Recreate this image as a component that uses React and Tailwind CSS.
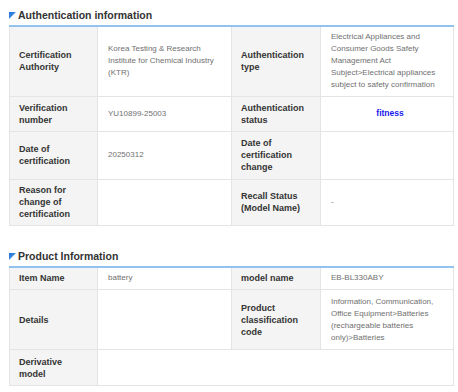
import React from 'react';

const Tri = () => (
  <svg width="7" height="7" viewBox="0 0 7 7" className="mr-[2px] shrink-0">
    <defs>
      <linearGradient id="tg" x1="0" y1="0" x2="1" y2="1">
        <stop offset="0" stopColor="#1f6fd6" />
        <stop offset="1" stopColor="#5aa6f0" />
      </linearGradient>
    </defs>
    <polygon points="0,0 7,0 0,7" fill="url(#tg)" />
  </svg>
);

const Title = ({ children, className = '' }) => (
  <div className={`flex items-center h-[19px] ${className}`}>
    <Tri />
    <span className="text-[10.5px] font-bold text-[#333] leading-none">{children}</span>
  </div>
);

const Label = ({ children }) => (
  <td className="bg-[#f4f4f4] border-r border-b border-[#e4e4e4] pl-[9px] pr-1 align-middle text-[9px] font-bold text-[#333] leading-[12px]">
    {children}
  </td>
);

const Value = ({ children, center = false, className = '' }) => (
  <td className={`border-r border-b border-[#e4e4e4] pl-[10px] pr-1 align-middle text-[8px] text-[#707070] leading-[12px] ${center ? 'text-center pl-0' : ''} ${className}`}>
    {children}
  </td>
);

const Cols = () => (
  <colgroup>
    <col style={{ width: 88 }} />
    <col style={{ width: 134 }} />
    <col style={{ width: 89 }} />
    <col style={{ width: 133 }} />
  </colgroup>
);

export default function App() {
  return (
    <div className="w-[458px] h-[392px] bg-white pl-[9px] pt-[6px]" style={{ fontFamily: '"Liberation Sans", Arial, sans-serif' }}>
      <div className="w-[444px]">
        <Title>Authentication information</Title>
        <table className="w-[444px] table-fixed border-collapse border-t-2 border-t-[#92c3ef] border-l border-l-[#e4e4e4]">
          <Cols />
          <tbody>
            <tr className="h-[70px]">
              <Label>Certification<br />Authority</Label>
              <Value>Korea Testing &amp; Research<br />Institute for Chemical Industry<br />(KTR)</Value>
              <Label>Authentication<br />type</Label>
              <Value>Electrical Appliances and<br />Consumer Goods Safety<br />Management Act<br />Subject&gt;Electrical appliances<br />subject to safety confirmation</Value>
            </tr>
            <tr className="h-[35px]">
              <Label>Verification<br />number</Label>
              <Value>YU10899-25003</Value>
              <Label>Authentication<br />status</Label>
              <Value center><span className="font-bold text-[#1a1aee] text-[8.5px]">fitness</span></Value>
            </tr>
            <tr className="h-[48px]">
              <Label>Date of<br />certification</Label>
              <Value>20250312</Value>
              <Label>Date of<br />certification<br />change</Label>
              <Value></Value>
            </tr>
            <tr className="h-[46px]">
              <Label>Reason for<br />change of<br />certification</Label>
              <Value></Value>
              <Label>Recall Status<br />(Model Name)</Label>
              <Value>-</Value>
            </tr>
          </tbody>
        </table>

        <Title className="mt-[21px]">Product Information</Title>
        <table className="w-[444px] table-fixed border-collapse border-t-2 border-t-[#92c3ef] border-l border-l-[#e4e4e4]">
          <Cols />
          <tbody>
            <tr className="h-[23px]">
              <Label>Item Name</Label>
              <Value>battery</Value>
              <Label>model name</Label>
              <Value>EB-BL330ABY</Value>
            </tr>
            <tr className="h-[60px]">
              <Label>Details</Label>
              <Value></Value>
              <Label>Product<br />classification<br />code</Label>
              <Value>Information, Communication,<br />Office Equipment&gt;Batteries<br />(rechargeable batteries<br />only)&gt;Batteries</Value>
            </tr>
            <tr className="h-[36px]">
              <Label>Derivative<br />model</Label>
              <td colSpan={3} className="border-r border-b border-[#e4e4e4]"></td>
            </tr>
          </tbody>
        </table>
      </div>
    </div>
  );
}
